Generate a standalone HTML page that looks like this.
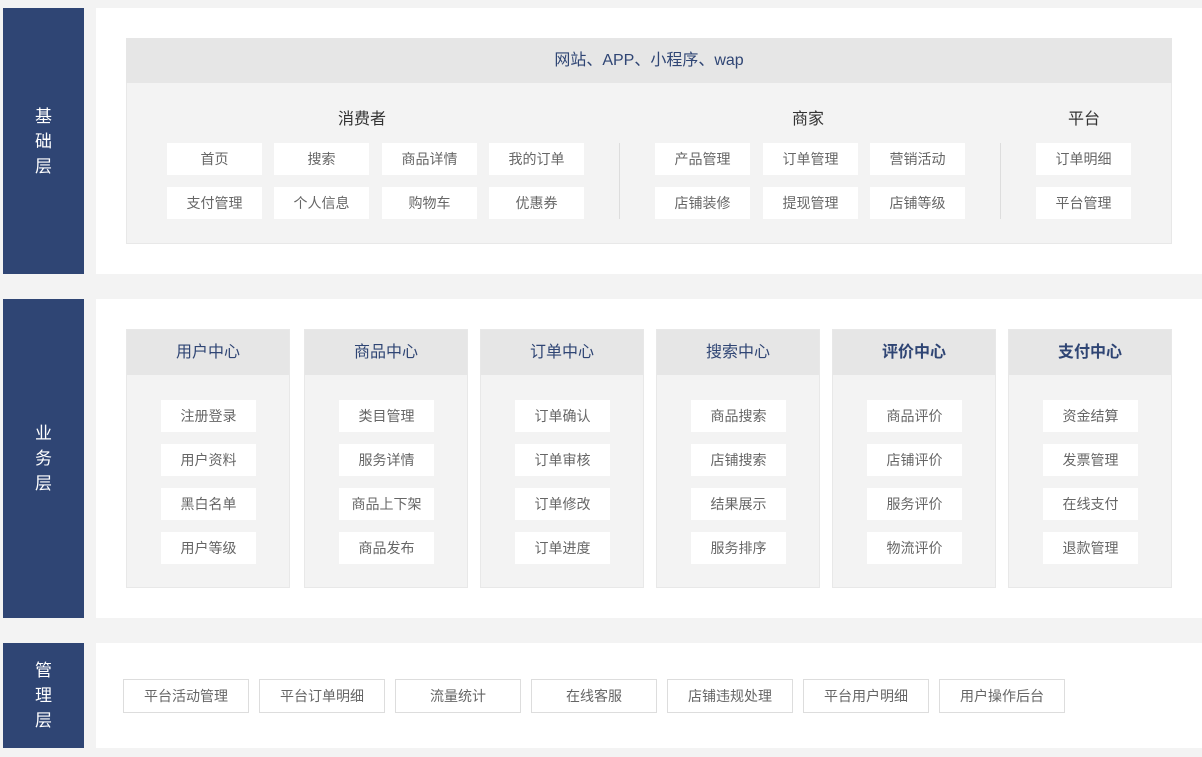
<!DOCTYPE html>
<html><head><meta charset="utf-8"><style>
*{margin:0;padding:0;box-sizing:border-box}
body{width:1202px;height:757px;background:#f3f3f3;position:relative;overflow:hidden;font-family:"Liberation Sans","Noto Sans CJK SC",sans-serif;}
.a{position:absolute}
.side{position:absolute;left:3px;width:81px;background:#2f4574;color:#fff;font-size:17px;line-height:25px;text-align:center;display:flex;align-items:center;justify-content:center}
.side span{width:18px;display:block}
.panel{position:absolute;left:96px;width:1106px;background:#fff}
.b{position:absolute;width:95px;height:32px;background:#fff;color:#666;font-size:14px;line-height:32px;text-align:center}
.t{position:absolute;font-size:16px;color:#333;text-align:center;width:120px}
.col{position:absolute;top:329px;width:164px;height:259px;background:#f3f3f3;border:1px solid #e8e8e8}
.col .h{height:45px;background:#e6e6e6;color:#2f4574;font-size:16px;line-height:45px;text-align:center}
.col .b{left:34px}
.m{position:absolute;top:679px;width:126px;height:34px;border:1px solid #ddd;background:#fff;color:#666;font-size:14px;line-height:32px;text-align:center}
</style></head><body>
<div class="side" style="top:8px;height:266px"><span>基础层</span></div>
<div class="side" style="top:299px;height:319px"><span>业务层</span></div>
<div class="side" style="top:643px;height:105px"><span>管理层</span></div>
<div class="panel" style="top:8px;height:266px"></div>
<div class="panel" style="top:299px;height:319px"></div>
<div class="panel" style="top:643px;height:105px"></div>

<div class="a" style="left:126px;top:38px;width:1046px;height:206px;background:#f3f3f3;border:1px solid #e8e8e8"></div>
<div class="a" style="left:126px;top:38px;width:1046px;height:45px;background:#e6e6e6;color:#2f4574;font-size:16px;line-height:45px;text-align:center">网站、APP、小程序、wap</div>
<div class="t" style="left:302px;top:105px">消费者</div>
<div class="t" style="left:748px;top:105px">商家</div>
<div class="t" style="left:1024px;top:105px">平台</div>
<div class="a" style="left:619px;top:143px;width:1px;height:76px;background:#ddd"></div>
<div class="a" style="left:1000px;top:143px;width:1px;height:76px;background:#ddd"></div>
<div class="b" style="left:167px;top:143px">首页</div>
<div class="b" style="left:274px;top:143px">搜索</div>
<div class="b" style="left:382px;top:143px">商品详情</div>
<div class="b" style="left:489px;top:143px">我的订单</div>
<div class="b" style="left:167px;top:187px">支付管理</div>
<div class="b" style="left:274px;top:187px">个人信息</div>
<div class="b" style="left:382px;top:187px">购物车</div>
<div class="b" style="left:489px;top:187px">优惠券</div>
<div class="b" style="left:655px;top:143px">产品管理</div>
<div class="b" style="left:763px;top:143px">订单管理</div>
<div class="b" style="left:870px;top:143px">营销活动</div>
<div class="b" style="left:655px;top:187px">店铺装修</div>
<div class="b" style="left:763px;top:187px">提现管理</div>
<div class="b" style="left:870px;top:187px">店铺等级</div>
<div class="b" style="left:1036px;top:143px">订单明细</div>
<div class="b" style="left:1036px;top:187px">平台管理</div>

<div class="col" style="left:126px"><div class="h">用户中心</div><div class="b" style="top:70px">注册登录</div><div class="b" style="top:114px">用户资料</div><div class="b" style="top:158px">黑白名单</div><div class="b" style="top:202px">用户等级</div></div>
<div class="col" style="left:304px"><div class="h">商品中心</div><div class="b" style="top:70px">类目管理</div><div class="b" style="top:114px">服务详情</div><div class="b" style="top:158px">商品上下架</div><div class="b" style="top:202px">商品发布</div></div>
<div class="col" style="left:480px"><div class="h">订单中心</div><div class="b" style="top:70px">订单确认</div><div class="b" style="top:114px">订单审核</div><div class="b" style="top:158px">订单修改</div><div class="b" style="top:202px">订单进度</div></div>
<div class="col" style="left:656px"><div class="h">搜索中心</div><div class="b" style="top:70px">商品搜索</div><div class="b" style="top:114px">店铺搜索</div><div class="b" style="top:158px">结果展示</div><div class="b" style="top:202px">服务排序</div></div>
<div class="col" style="left:832px"><div class="h" style="font-weight:bold">评价中心</div><div class="b" style="top:70px">商品评价</div><div class="b" style="top:114px">店铺评价</div><div class="b" style="top:158px">服务评价</div><div class="b" style="top:202px">物流评价</div></div>
<div class="col" style="left:1008px"><div class="h" style="font-weight:bold">支付中心</div><div class="b" style="top:70px">资金结算</div><div class="b" style="top:114px">发票管理</div><div class="b" style="top:158px">在线支付</div><div class="b" style="top:202px">退款管理</div></div>

<div class="m" style="left:123px">平台活动管理</div>
<div class="m" style="left:259px">平台订单明细</div>
<div class="m" style="left:395px">流量统计</div>
<div class="m" style="left:531px">在线客服</div>
<div class="m" style="left:667px">店铺违规处理</div>
<div class="m" style="left:803px">平台用户明细</div>
<div class="m" style="left:939px">用户操作后台</div>
</body></html>
